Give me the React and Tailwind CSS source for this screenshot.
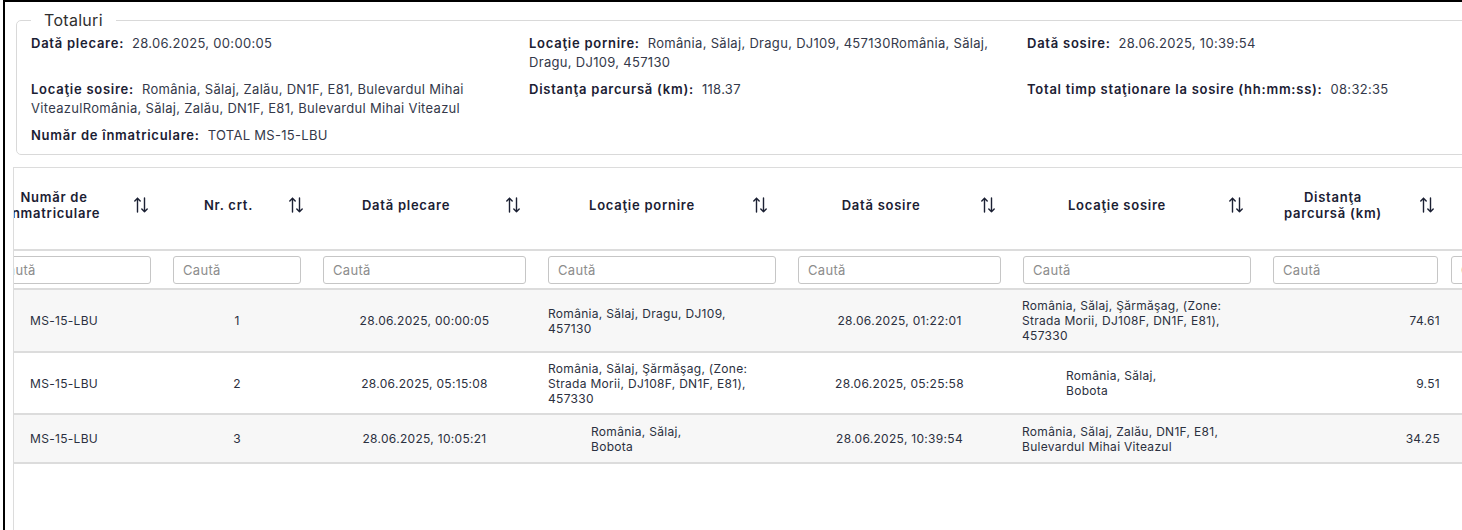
import React, { useState } from 'react';

const TOTALS = [
  { label: 'Dată plecare:', value: '28.06.2025, 00:00:05' },
  { label: 'Locaţie pornire:', value: 'România, Sălaj, Dragu, DJ109, 457130România, Sălaj, Dragu, DJ109, 457130' },
  { label: 'Dată sosire:', value: '28.06.2025, 10:39:54' },
  { label: 'Locaţie sosire:', value: 'România, Sălaj, Zalău, DN1F, E81, Bulevardul Mihai ViteazulRomânia, Sălaj, Zalău, DN1F, E81, Bulevardul Mihai Viteazul' },
  { label: 'Distanţa parcursă (km):', value: '118.37' },
  { label: 'Total timp staţionare la sosire (hh:mm:ss):', value: '08:32:35' },
  { label: 'Număr de înmatriculare:', value: 'TOTAL MS-15-LBU' },
];

// fixed column widths; table is scrolled a little to the right
// gap = space between title and sort icon, pr = space right of icon
const COLUMNS = [
  { key: 'plate', title: ['Număr de', 'înmatriculare'], w: 'w-[185px]', gap: 'ml-[14px]', pr: 'pr-[14px]' },
  { key: 'nr', title: ['Nr. crt.'], w: 'w-[150px]', gap: 'ml-[5px]', pr: 'pr-[9px]' },
  { key: 'start', title: ['Dată plecare'], w: 'w-[225px]', gap: 'ml-[17px]', pr: 'pr-[17px]' },
  { key: 'from', title: ['Locaţie pornire'], w: 'w-[250px]', gap: 'ml-[17px]', pr: 'pr-[20px]' },
  { key: 'end', title: ['Dată sosire'], w: 'w-[225px]', gap: 'ml-[17px]', pr: 'pr-[17px]' },
  { key: 'to', title: ['Locaţie sosire'], w: 'w-[250px]', gap: 'ml-[18px]', pr: 'pr-[19px]' },
  { key: 'dist', title: ['Distanţa', 'parcursă (km)'], w: 'w-[178px]', gap: 'ml-[27px]', pr: 'pr-[6px]' },
  { key: 'stop', title: [], w: 'w-[200px]', gap: 'ml-[17px]', pr: 'pr-[17px]' },
];

const ROWS = [
  {
    h: 'h-[63px]', bg: 'bg-[#f7f7f7]', nr: '1', start: '28.06.2025, 00:00:05', end: '28.06.2025, 01:22:01',
    from: { lines: ['România, Sălaj, Dragu, DJ109,', '457130'] },
    to: { lines: ['România, Sălaj, Şărmăşag, (Zone:', 'Strada Morii, DJ108F, DN1F, E81),', '457330'] },
    dist: '74.61',
  },
  {
    h: 'h-[62px]', bg: 'bg-white', nr: '2', start: '28.06.2025, 05:15:08', end: '28.06.2025, 05:25:58',
    from: { lines: ['România, Sălaj, Şărmăşag, (Zone:', 'Strada Morii, DJ108F, DN1F, E81),', '457330'] },
    to: { lines: ['România, Sălaj,', 'Bobota'], narrow: true },
    dist: '9.51',
  },
  {
    h: 'h-[49px]', bg: 'bg-[#f7f7f7]', nr: '3', start: '28.06.2025, 10:05:21', end: '28.06.2025, 10:39:54',
    from: { lines: ['România, Sălaj,', 'Bobota'], narrow: true },
    to: { lines: ['România, Sălaj, Zalău, DN1F, E81,', 'Bulevardul Mihai Viteazul'] },
    dist: '34.25',
  },
];

function SortIcon({ className }) {
  return (
    <svg width="14" height="16" viewBox="0 0 14 16" fill="none" stroke="currentColor" strokeWidth="1.4" strokeLinecap="round" strokeLinejoin="round" className={className}>
      <path d="M3.5 15V1.2M0.8 4L3.5 1.2L6.2 4" />
      <path d="M10.5 1v13.8M7.8 12L10.5 14.8L13.2 12" />
    </svg>
  );
}

function Place({ place }) {
  return (
    <div className={place.narrow ? 'w-[142px] mx-auto' : 'w-full'}>
      {place.lines.map((l, i) => <div key={i}>{l}</div>)}
    </div>
  );
}

export default function App() {
  const [filters, setFilters] = useState({});

  return (
    <div className="w-[1462px] h-[530px] overflow-hidden bg-white" style={{ fontFamily: 'Inter, "Noto Sans", sans-serif' }}>
      <div className="ml-[3px] w-[1560px] h-[540px] border-l-2 border-t-2 border-black pt-[8px] pl-[8px]">
        {/* Totaluri */}
        <fieldset className="ml-[3px] w-[1530px] border border-[#d9d9d9] rounded-[5px] px-[14px] pb-[9px]">
          <legend className="px-[13px] text-[16px] leading-[20px] text-[#2f2f2f] tracking-[0.3px]">Totaluri</legend>
          <div className="grid grid-cols-[498px_498px_498px] gap-y-[8px] pt-[4px] text-[13px] leading-[19px]">
            {TOTALS.map((t) => (
              <div key={t.label} className="pr-[20px]">
                <span className="font-semibold text-[#1b2033] tracking-[0.75px] mr-[8px]">{t.label}</span>
                <span className="text-[#34394a] tracking-[0.3px]">{t.value}</span>
              </div>
            ))}
          </div>
        </fieldset>

        {/* Tabel */}
        <div className="mt-[12px] w-[1540px] h-[400px] border border-[#dcdcdc] overflow-hidden">
          <div className="-ml-[37px] w-[1663px]">
            <div className="flex h-[83px] border-b-2 border-[#dcdcdc]">
              {COLUMNS.map((c) => (
                <div key={c.key} className={`${c.w} ${c.pr} shrink-0 flex items-center pl-[11px] pb-[8px]`}>
                  <div className="flex-1 text-center text-[13px] leading-[16px] font-semibold tracking-[0.75px] text-[#1b2033] whitespace-nowrap">
                    {c.title.map((t, i) => <div key={i}>{t}</div>)}
                  </div>
                  <SortIcon className={`${c.gap} shrink-0 text-[#1b2033]`} />
                </div>
              ))}
            </div>

            <div className="flex h-[39px] border-b-2 border-[#dcdcdc] pt-[5px]">
              {COLUMNS.map((c) => (
                <div key={c.key} className={`${c.w} shrink-0 ${c.key === 'dist' ? 'pl-[11px] pr-[2px]' : 'px-[11px]'}`}>
                  <input
                    value={filters[c.key] || ''}
                    onChange={(e) => setFilters({ ...filters, [c.key]: e.target.value })}
                    placeholder="Caută"
                    className="w-full h-[28px] border border-[#c6c6c6] rounded-[3px] pl-[9px] text-[13px] tracking-[0.3px] text-[#333] placeholder:text-[#8c8c8c] outline-none bg-white"
                  />
                </div>
              ))}
            </div>

            {ROWS.map((r) => (
              <div key={r.nr} className={`flex ${r.h} ${r.bg} border-b-2 border-[#dcdcdc] text-[12px] leading-[15px] tracking-[0.3px] text-[#2b3040]`}>
                <div className="w-[185px] shrink-0 flex items-center pl-[53px]">MS-15-LBU</div>
                <div className="w-[150px] shrink-0 flex items-center justify-center">{r.nr}</div>
                <div className="w-[225px] shrink-0 flex items-center justify-center">{r.start}</div>
                <div className="w-[250px] shrink-0 flex items-center px-[11px]">
                  <Place place={r.from} />
                </div>
                <div className="w-[225px] shrink-0 flex items-center justify-center">{r.end}</div>
                <div className="w-[250px] shrink-0 flex items-center px-[10px]">
                  <Place place={r.to} />
                </div>
                <div className="w-[178px] shrink-0 flex items-center justify-end">{r.dist}</div>
                <div className="w-[200px] shrink-0" />
              </div>
            ))}
          </div>
        </div>
      </div>
    </div>
  );
}
